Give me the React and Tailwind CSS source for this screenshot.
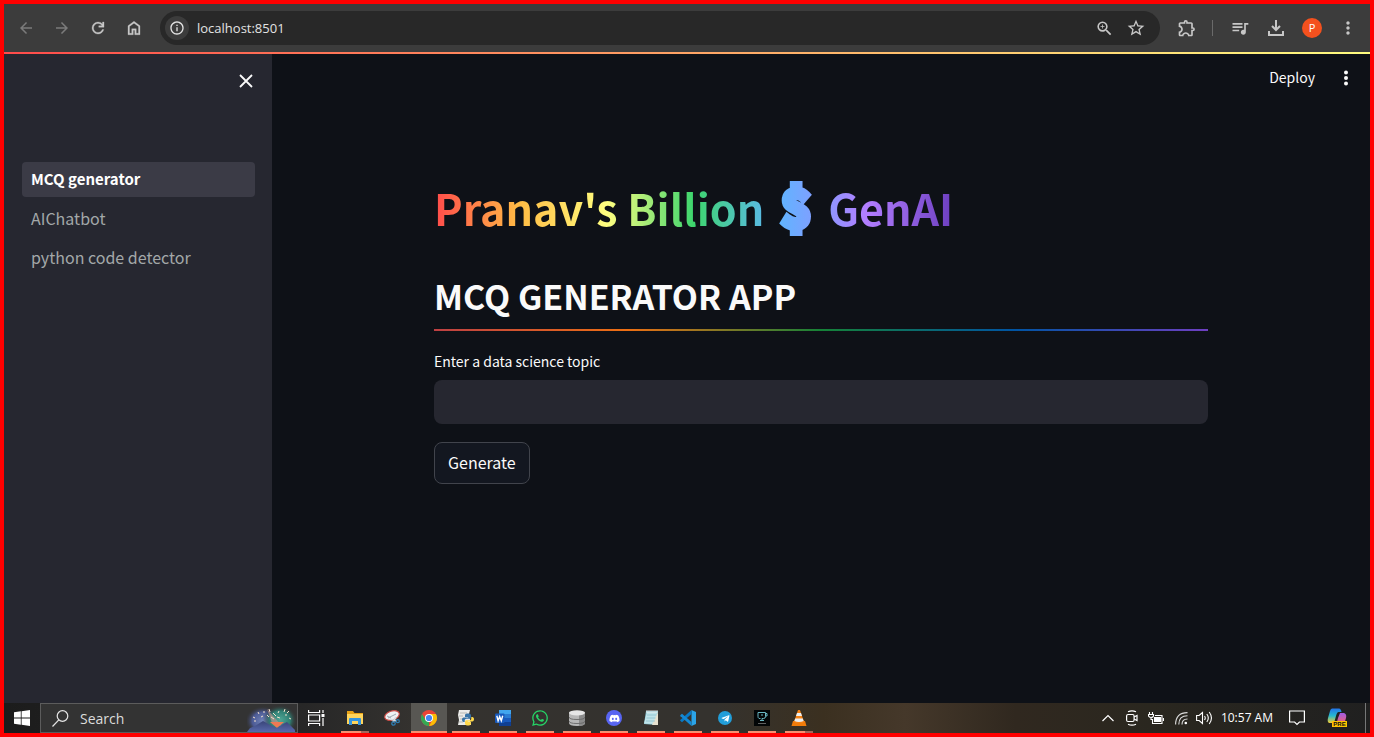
import React from 'react';
import { MdArrowBack, MdArrowForward, MdInfoOutline, MdZoomIn, MdStarOutline, MdOutlineExtension, MdQueueMusic, MdMoreVert } from 'react-icons/md';
import { FaWhatsapp, FaDiscord, FaTelegramPlane } from 'react-icons/fa';

const SANS = "font-['Noto_Sans_CJK_JP','Noto_Sans',sans-serif]";
const SYSTEM = "font-['Open_Sans','Noto_Sans',sans-serif]";

function IconButton({ label, children, dim }) {
  return (
    <button type="button" aria-label={label} className={`flex size-9 items-center justify-center ${dim ? 'text-[#7b7b7b]' : 'text-[#c7c7c7]'}`}>
      {children}
    </button>
  );
}

function Toolbar() {
  return (
    <header className={`flex h-12 items-center bg-[#3c3c3c] px-1 ${SYSTEM}`}>
      <IconButton label="Back" dim><MdArrowBack size={18} /></IconButton>
      <IconButton label="Forward" dim><MdArrowForward size={18} /></IconButton>
      <IconButton label="Reload">
        <svg viewBox="0 0 24 24" className="size-[18px]" fill="currentColor"><path d="M12 20q-3.35 0-5.675-2.325T4 12q0-3.35 2.325-5.675T12 4q1.725 0 3.3.713T18 6.75V4h2v7h-7V9h4.2q-.8-1.4-2.188-2.2T12 6Q9.5 6 7.75 7.75T6 12q0 2.5 1.75 4.25T12 18q1.925 0 3.475-1.1T17.65 14h2.1q-.7 2.65-2.85 4.325T12 20Z" stroke="currentColor" strokeWidth=".4" /></svg>
      </IconButton>
      <IconButton label="Home">
        <svg viewBox="0 0 24 24" className="size-[18px]" fill="currentColor"><path d="M6 19h3v-6h6v6h3v-9l-6-4.5L6 10v9Zm-2 2V9l8-6 8 6v12h-7v-6h-2v6H4Z" stroke="currentColor" strokeWidth=".4" /></svg>
      </IconButton>
      <div className="ml-2 flex h-[34px] min-w-0 grow items-center rounded-full bg-[#282828] pl-[5px] pr-2">
        <button type="button" aria-label="Site information" className="flex size-6 shrink-0 items-center justify-center rounded-full bg-[#3c3c3c] text-[#e3e3e3]">
          <MdInfoOutline size={16} />
        </button>
        <input aria-label="Address" defaultValue="localhost:8501" className="ml-2 min-w-0 grow bg-transparent pt-0.5 text-[13px] text-[#e3e3e3] outline-none" />
        <button type="button" aria-label="Zoom" className="flex size-8 items-center justify-center text-[#c7c7c7]"><MdZoomIn size={19} /></button>
        <button type="button" aria-label="Bookmark" className="flex size-8 items-center justify-center text-[#c7c7c7]"><MdStarOutline size={20} /></button>
      </div>
      <div className="ml-[9px] flex items-center">
        <IconButton label="Extensions"><MdOutlineExtension size={20} /></IconButton>
        <div className="mr-[9px] ml-[7px] h-4 w-px bg-[#6a6a6a]" />
        <IconButton label="Media"><MdQueueMusic size={20} /></IconButton>
        <IconButton label="Downloads">
          <svg viewBox="0 0 18 18" className="size-[18px]" fill="none" stroke="currentColor" strokeWidth="2"><path d="M9 1v10M5 7l4 4 4-4M2 12v4h14v-4" /></svg>
        </IconButton>
        <IconButton label="Profile"><span className="flex size-5 items-center justify-center rounded-full bg-[#f4511e] text-[11px] text-white">P</span></IconButton>
        <IconButton label="Menu"><MdMoreVert size={20} /></IconButton>
      </div>
    </header>
  );
}

function Sidebar() {
  const item = 'flex h-[35px] items-center rounded px-[9px]';
  return (
    <aside className="w-[268px] shrink-0 bg-[#262730] px-[18px]">
      <div className="flex h-[108px] items-start justify-end pt-[19px]">
        <button type="button" aria-label="Close sidebar" className="flex size-4 items-center justify-center text-[#fafafa]">
          <svg viewBox="0 0 16 16" className="size-4" stroke="currentColor" strokeWidth="1.800"><path d="M2 2l12 12M14 2L2 14" /></svg>
        </button>
      </div>
      <nav className="flex w-[233px] flex-col gap-1">
        <a href="#mcq" className={`${item} bg-[#3b3b46] text-[15px] font-bold text-white`}>MCQ generator</a>
        <a href="#chatbot" className={`${item} pb-0.5 text-[16px] text-[#a3a8a9]`}>AIChatbot</a>
        <a href="#detector" className={`${item} pb-0.5 text-[16px] text-[#a3a8a9]`}>python code detector</a>
      </nav>
    </aside>
  );
}

function MainPane() {
  return (
    <main className="flex min-w-0 grow flex-col bg-[#0e1117] text-[#fafafa]">
      <div className="flex h-12 items-center justify-end gap-[22px] pr-[15px]">
        <button type="button" className="pb-0.5 text-[14px]">Deploy</button>
        <button type="button" aria-label="App menu" className="flex w-[18px] justify-center">
          <svg viewBox="0 0 4 16" className="h-4 w-1" fill="currentColor"><circle cx="2" cy="2.5" r="2" /><circle cx="2" cy="8" r="2" /><circle cx="2" cy="13.5" r="2" /></svg>
        </button>
      </div>
      <div className="mx-auto w-full max-w-[774px] pt-[71px]">
        <h1 className="h-[64px] w-fit whitespace-nowrap bg-[linear-gradient(to_right,#ff4b4b,#ffbd45,#ffff80,#3dd56d,#60b4ff,#b27eff,#6d3fc0)] bg-clip-text text-[43px] leading-[64px] font-bold text-transparent">
          Pranav's Billion <span className="px-2 text-[48px] leading-[64px] [-webkit-text-stroke:8px_transparent]">$</span> GenAI
        </h1>
        <h2 className="mt-9 text-[34px] leading-[46px] font-bold">MCQ GENERATOR APP</h2>
        <div className="mt-2.5 h-0.5 bg-[linear-gradient(to_right,#bd4043,#ed6f13,#158237,#0054a3,#6d3fc0)]" />
        <form className="mt-[18px] flex flex-col items-start" onSubmit={(e) => e.preventDefault()}>
          <label htmlFor="topic" className="text-[14px] leading-6">Enter a data science topic</label>
          <input id="topic" className="mt-[7px] h-11 w-full rounded-lg bg-[#262730] px-3 text-[16px] outline-none" />
          <button type="submit" className="mt-[18px] h-[42px] rounded-lg border border-[#41444c] bg-[#131720] px-[13px] pb-0.5 text-[16px]">Generate</button>
        </form>
      </div>
    </main>
  );
}

function Explorer() {
  return <svg viewBox="0 0 16 16" className="size-4"><path d="M0 1h6l1.500 2H16v11H0z" fill="#e8a317" /><path d="M0 4h16v10H0z" fill="#ffd55c" /><path d="M2 15V9q0-1 1-1h10q1 0 1 1v6h-3v-4H5v4z" fill="#3394df" /></svg>;
}
function Snip() {
  return <svg viewBox="0 0 16 16" className="size-4"><ellipse cx="8" cy="5.500" rx="7.500" ry="4.500" transform="rotate(-18 8 5.500)" fill="#eef1f3" stroke="#c94a45" strokeWidth="1.200" /><path d="M4 8l8-4M3 6l4 2" stroke="#9fa9b1" /><path d="M6 9l6 2M12 7l-3 5" stroke="#d7dde2" strokeWidth="1.500" /><circle cx="9.500" cy="13.500" r="1.700" fill="none" stroke="#2e7db4" strokeWidth="1.300" /><circle cx="13.800" cy="11.200" r="1.500" fill="none" stroke="#2e7db4" strokeWidth="1.300" /></svg>;
}
function Chrome() {
  return <svg viewBox="0 0 16 16" className="size-4"><circle cx="8" cy="8" r="8" fill="#ea4335" /><path d="M1.070 4L4.540 10 8 12 8 16A8 8 0 0 1 1.070 4Z" fill="#34a853" /><path d="M8 4h6.930A8 8 0 0 1 8 16l3.460-6Z" fill="#fbbc05" /><circle cx="8" cy="8" r="4" fill="#fff" /><circle cx="8" cy="8" r="3.100" fill="#4285f4" /></svg>;
}
const snake = 'M6 0C3 0 3 1.300 3 2v1.500h3.200V4H1.700C.5 4 0 5 0 6.200s.6 2.200 1.700 2.200h1V7c0-1 .8-1.800 1.800-1.800h3C8.400 5.200 9 4.500 9 3.700V2C9 .6 7.700 0 6 0Z';
function Python() {
  return <svg viewBox="0 0 16 16" className="size-4"><path d="M1 0h11l-1 4 2 11H0l1-5-1-5z" fill="#ecece9" /><path d="M2 3h7M1 6h4M2 9h3M1 12h4" stroke="#b9b9b5" /><g transform="translate(4 3.500)"><path d={snake} fill="#3a75a8" /><path d={snake} fill="#ffd94a" transform="rotate(180 6 6)" /></g></svg>;
}
function Word() {
  return <svg viewBox="0 0 16 16" className="size-4"><path d="M4 0h12v4H4z" fill="#41a5ee" /><path d="M4 4h12v4H4z" fill="#2b7cd3" /><path d="M4 8h12v4H4z" fill="#185abd" /><path d="M4 12h12v4H4z" fill="#103f91" /><rect y="3.500" width="9.500" height="9.500" rx="1" fill="#185abd" /><path d="M1.800 5.800l1.300 5 1.600-4.300 1.600 4.300 1.400-5" fill="none" stroke="#fff" strokeWidth="1.400" /></svg>;
}
function Database() {
  return <svg viewBox="0 0 16 16" className="size-4"><path d="M0 2.500v10.500q0 3 8 3t8-3V2.500z" fill="#b7b7b7" /><path d="M10 4v12q6-.5 6-3V3z" fill="#8b8b8b" /><ellipse cx="8" cy="2.800" rx="8" ry="2.600" fill="#e6e6e6" /><path d="M0 7q0 2.500 8 2.500T16 7M0 11q0 2.500 8 2.500t8-2.500" fill="none" stroke="#666" strokeWidth=".9" /></svg>;
}
function Notepad() {
  return <svg viewBox="0 0 16 16" className="size-4"><path d="M3 1h12l-1 14-13-1z" fill="#8fc6d2" /><path d="M4 2h10l-2 12-11-.5z" fill="#bfe3e9" /><path d="M15 2v13H9z" fill="#e6e1cf" /><path d="M4 0v3M6 0v3M8 0v3M10 0v3M12 0v3M14 0v3" stroke="#ececec" strokeWidth=".9" /><path d="M4 5h9M3.500 8h9M3 11h9" stroke="#8ebfca" strokeWidth=".8" /></svg>;
}
function Code() {
  return <svg viewBox="0 0 16 16" className="size-4"><path d="M11.500 0L16 2v12l-4.500 2z" fill="#2ba4e8" /><path d="M11.500 0v4L2 12.200.5 11q-.6-.6 0-1.200z" fill="#0879c5" /><path d="M11.500 16v-4L2 3.800.5 5q-.6.600 0 1.200z" fill="#1489d4" /></svg>;
}
function Recorder() {
  return <svg viewBox="0 0 16 16" className="size-4"><path d="M0 0h16v16H0z" fill="#030607" /><path d="M6.500 8.500H5q-1-.5-1-2v-4h7.500v4q0 2-2 2H8v2M11.500 3.500H13V6h-1.500M6 10.500h4M7 5h2" fill="none" stroke="#69b6c2" strokeWidth="1" /><path d="M4 13.500h8" stroke="#777" strokeWidth=".8" /></svg>;
}
function Cone() {
  return <svg viewBox="0 0 16 16" className="size-4"><path d="M2 11h12l1.500 5H.5z" fill="#f27c0a" /><path d="M7 0h2l4 12q-5 2.500-10 0z" fill="#f58215" /><path d="M6 3h4l1 3H5zM4.200 8.500h7.600l.9 2.500q-4.700 2-9.400 0z" fill="#eceff1" /></svg>;
}

const apps = [
  { name: 'File Explorer', icon: <Explorer />, bar: 'split' },
  { name: 'Snipping Tool', icon: <Snip />, bar: 'none' },
  { name: 'Google Chrome', icon: <Chrome />, bar: 'full', active: true },
  { name: 'IDLE', icon: <Python />, bar: 'one' },
  { name: 'Word', icon: <Word />, bar: 'one' },
  { name: 'WhatsApp', icon: <FaWhatsapp size={18} className="text-[#25d366]" />, bar: 'one' },
  { name: 'Database', icon: <Database />, bar: 'one' },
  { name: 'Discord', icon: <span className="flex size-4 items-center justify-center rounded-full bg-[#5865f2]"><FaDiscord size={11} className="text-white" /></span>, bar: 'one' },
  { name: 'Notepad', icon: <Notepad />, bar: 'one' },
  { name: 'Visual Studio Code', icon: <Code />, bar: 'one' },
  { name: 'Telegram', icon: <span className="flex size-[14px] items-center justify-center rounded-full bg-[#229ed9]"><FaTelegramPlane size={9} className="text-white" /></span>, bar: 'one' },
  { name: 'Recorder', icon: <Recorder />, bar: 'one' },
  { name: 'VLC', icon: <Cone />, bar: 'split' },
];

function AppButton({ app }) {
  return (
    <button type="button" aria-label={app.name} className={`flex w-9 flex-col items-center ${app.active ? 'bg-[#585753]' : ''}`}>
      <span className="flex h-7 items-center justify-center pt-0.5">{app.icon}</span>
      {app.bar === 'full' && <span className="h-0.5 w-full bg-[#f98f6f]" />}
      {app.bar === 'one' && <span className="h-0.5 w-7 bg-[#f98f6f]" />}
      {app.bar === 'split' && <span className="flex h-0.5 w-7"><span className="w-5 bg-[#f98f6f]" /><span className="grow bg-[#a5675a]" /></span>}
    </button>
  );
}

function SearchArt() {
  return (
    <svg viewBox="0 0 50 28" className="h-7 w-[50px] shrink-0">
      <defs>
        <radialGradient id="glowA"><stop offset="0" stopColor="#7285bb" /><stop offset=".6" stopColor="#4c5a94" /><stop offset="1" stopColor="#333" stopOpacity="0" /></radialGradient>
        <radialGradient id="glowB"><stop offset="0" stopColor="#50a695" /><stop offset=".6" stopColor="#2f7f73" /><stop offset="1" stopColor="#333" stopOpacity="0" /></radialGradient>
        <linearGradient id="hill" x2="0" y2="1"><stop offset="0" stopColor="#394478" /><stop offset="1" stopColor="#596aad" /></linearGradient>
      </defs>
      <ellipse cx="16" cy="17" rx="18" ry="15" fill="url(#glowA)" />
      <ellipse cx="33" cy="16" rx="17" ry="15" fill="url(#glowB)" />
      <path d="M20 5l5 14 10 3z" fill="#c99591" opacity=".6" />
      <path d="M23 18l7 6 7-6z" fill="#ee7954" />
      <path d="M0 28l3-4 5-2 8-5 7 4 7 3 6-4 4-2 8 8v2z" fill="url(#hill)" />
      <path d="M6 13l2 1M11 8l1 2M7 17h2M17 7v2M22 5l1 3M26 9l3 3M24 13l3 2M30 13l3 1M32 7l-1 2M38 5l-1 3M42 7l-2 2M38 11h2M42 14l2 1M14 13l2-1M20 11l2 2" stroke="#f4e2cb" strokeWidth="1" />
    </svg>
  );
}

function Taskbar() {
  return (
    <footer className={`flex h-[30px] items-stretch bg-[linear-gradient(to_right,#1c1c1c,#272727_22%,#34322f_30%,#34322e_52%,#3b3020_60%,#45382a_66%,#30281f_74%,#2a271f_84%,#202020)] text-white ${SYSTEM}`}>
      <button type="button" aria-label="Start" className="flex w-9 items-center justify-center">
        <svg viewBox="0 0 16 16" className="size-4" fill="#fff"><path d="M0 2.200l6.800-.9v6.300H0zM7.600 1.200L16 0v7.600H7.600zM0 8.400h6.800v6.300L0 13.800zM7.600 8.400H16V16l-8.400-1.200z" /></svg>
      </button>
      <label className="flex w-[258px] items-center border border-[#5c5c5c] bg-[#333] pl-[11px]">
        <svg viewBox="0 0 17 17" className="size-[17px] shrink-0" fill="none" stroke="#e5e5e5" strokeWidth="1.200"><circle cx="10.500" cy="6" r="5.300" /><path d="M6.800 9.800L.5 16.500" /></svg>
        <input aria-label="Search" placeholder="Search" className="ml-[11px] min-w-0 grow bg-transparent text-[14px] outline-none placeholder:text-[#dcdcdc]" />
        <SearchArt />
      </label>
      <button type="button" aria-label="Task view" className="flex w-9 items-center justify-center">
        <svg viewBox="0 0 17 16" className="h-4 w-[17px]" fill="none" stroke="#fff" strokeWidth="1.200"><path d="M.6 0v2.500h11V0M.6 16v-2.500h11V16M.6 5h11v6H.6zM15 0v3M15 8v8" /><path d="M13.500 4h3v3h-3z" fill="#fff" stroke="none" /></svg>
      </button>
      <div className="ml-[3px] flex gap-px">{apps.map((a) => <AppButton key={a.name} app={a} />)}</div>
      <div className="ml-auto flex items-center">
        <button type="button" aria-label="Show hidden icons" className="w-3"><svg viewBox="0 0 12 8" className="h-2 w-3" fill="none" stroke="#fff" strokeWidth="1.200"><path d="M.5 7L6 1.500 11.500 7" /></svg></button>
        <svg viewBox="0 0 12 16" className="ml-3 h-4 w-3" fill="none" stroke="#fff" strokeWidth="1.200"><rect x=".6" y="4.500" width="7.500" height="7" rx="1.500" /><path d="M8 7l3-1.500v5L8 9M2 1.800q4-2 8 0M2 14.200q4 2 8 0" /></svg>
        <svg viewBox="0 0 16 13" className="ml-[10px] h-[13px] w-4" fill="none" stroke="#fff" strokeWidth="1.100"><path d="M1.500 0v2M4.500 0v2M.5 2.500h5v1.500Q5 5.500 3 5.500T.5 4zM3 5.500V7.500H4.500M7 3.500h7v8H4.500V7M15.500 6v3" /><path d="M6.500 5.500h6v4h-6z" fill="#fff" /></svg>
        <svg viewBox="0 0 13 13" className="ml-[11px] size-[13px]" fill="none" stroke="#ddd" strokeWidth="1.100"><path d="M.6 12.500Q.6.600 12.500.6M3.800 12.500Q3.800 3.800 12.500 3.800M7 12.500Q7 7 12.500 7" /><circle cx="10.800" cy="11" r="1.300" fill="#fff" stroke="none" /></svg>
        <svg viewBox="0 0 17 14" className="ml-2 h-[14px] w-[17px]" fill="none" stroke="#fff" strokeWidth="1.100"><path d="M.6 4.500h2.500L6.500 1.500v11L3.100 9.500H.6zM8.500 5q1.500 2 0 4M10.800 3q3 4 0 8M13.200 1q4.500 6 0 12" /></svg>
        <time className="ml-2 text-[12px] whitespace-nowrap">10:57 AM</time>
        <button type="button" aria-label="Notifications" className="ml-4"><svg viewBox="0 0 16 16" className="size-4" fill="none" stroke="#fff" strokeWidth="1.200"><path d="M.6 1h14.800v11h-5L8 14.500 5.600 12h-5z" /></svg></button>
        <button type="button" aria-label="Copilot" className="ml-[22px]">
          <svg viewBox="0 0 20 20" className="size-5">
            <defs><linearGradient id="cpA" x2="0" y2="1"><stop stopColor="#2374e8" /><stop offset=".5" stopColor="#25b9cf" /><stop offset="1" stopColor="#f5cc2f" /></linearGradient><linearGradient id="cpB" x2="0" y2="1"><stop stopColor="#a05be8" /><stop offset="1" stopColor="#f0636e" /></linearGradient></defs>
            <path d="M5 .5h7q2 0 2.500 3.500h-3Q10 4 9 8l-2 7H2q-2-1-1-5l2-7q.6-2.500 2-2.500z" fill="url(#cpA)" /><path d="M13 5h4q3 1 2 5l-1.500 5H11q-1.500-2 0-5z" fill="url(#cpB)" /><path d="M5 13h15v6H5z" fill="#ffc400" />
            <text x="12.500" y="18.200" textAnchor="middle" fontSize="6" fontWeight="700" fontFamily="Liberation Sans, sans-serif" fill="#111">PRE</text>
          </svg>
        </button>
        <span className="ml-[18px] h-[30px] w-px bg-[#777]" />
        <span className="w-1" />
      </div>
    </footer>
  );
}

export default function App() {
  return (
    <div className={`flex min-h-screen flex-col border-4 border-[#ff0000] bg-[#0e1117] ${SANS}`}>
      <Toolbar />
      <div className="h-0.5 bg-[linear-gradient(to_right,#ff4b4b,#fffd80)]" />
      <div className="flex grow"><Sidebar /><MainPane /></div>
      <Taskbar />
    </div>
  );
}
